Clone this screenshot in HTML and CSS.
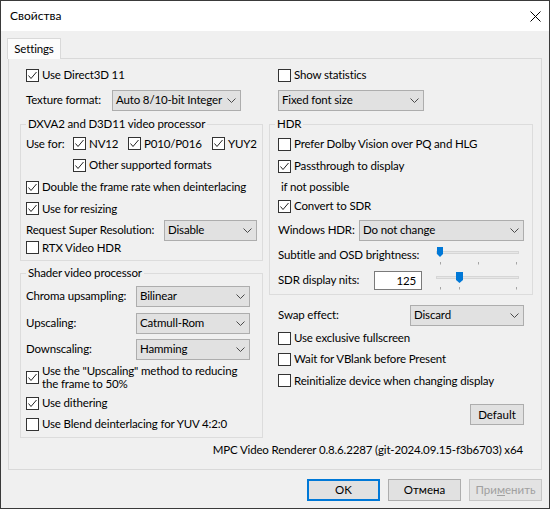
FILE: index.html
```html
<!DOCTYPE html>
<html lang="ru">
<head>
    <meta charset="UTF-8">
    <title>Свойства</title>
    <link rel="stylesheet" href="styles.css">
</head>
<body>
<div class="window">
    <div class="titlebar">
        <span class="title">Свойства</span>
        <svg class="close" width="11" height="11" viewBox="0 0 11 11"><path d="M0.5 0.5L10.5 10.5M10.5 0.5L0.5 10.5"/></svg>
    </div>
    <div class="client">
        <div class="tabbar"><div class="tab">Settings</div></div>
        <div class="panel">
            <div class="columns">
                <!-- left column -->
                <div class="col col-left">
                    <label class="row h22"><span class="box"><svg viewBox="0 0 11 11"><path d="M1.5 5.5L4 8.5 9.5 2"/></svg></span>Use Direct3D 11</label>
                    <div class="row h28">
                        <span class="lbl w86">Texture format:</span>
                        <div class="select w129"><span>Auto 8/10-bit Integer</span><svg viewBox="0 0 9 5"><path d="M0.5 0.5L4.5 4.5 8.5 0.5"/></svg></div>
                    </div>
                    <fieldset class="group group-left">
                        <legend>DXVA2 and D3D11 video processor</legend>
                        <div class="row h21 usefor">
                            <span>Use for:</span>
                            <label class="chk"><span class="box"><svg viewBox="0 0 11 11"><path d="M1.5 5.5L4 8.5 9.5 2"/></svg></span>NV12</label>
                            <label class="chk"><span class="box"><svg viewBox="0 0 11 11"><path d="M1.5 5.5L4 8.5 9.5 2"/></svg></span>P010/P016</label>
                            <label class="chk"><span class="box"><svg viewBox="0 0 11 11"><path d="M1.5 5.5L4 8.5 9.5 2"/></svg></span>YUY2</label>
                        </div>
                        <label class="row h22 indent"><span class="box"><svg viewBox="0 0 11 11"><path d="M1.5 5.5L4 8.5 9.5 2"/></svg></span>Other supported formats</label>
                        <label class="row h22"><span class="box"><svg viewBox="0 0 11 11"><path d="M1.5 5.5L4 8.5 9.5 2"/></svg></span>Double the frame rate when deinterlacing</label>
                        <label class="row h21"><span class="box"><svg viewBox="0 0 11 11"><path d="M1.5 5.5L4 8.5 9.5 2"/></svg></span>Use for resizing</label>
                        <div class="row h22">
                            <span class="lbl w138">Request Super Resolution:</span>
                            <div class="select w93"><span>Disable</span><svg viewBox="0 0 9 5"><path d="M0.5 0.5L4.5 4.5 8.5 0.5"/></svg></div>
                        </div>
                        <label class="row h13"><span class="box"></span>RTX Video HDR</label>
                    </fieldset>
                    <fieldset class="group group-left shader">
                        <legend>Shader video processor</legend>
                        <div class="row h28">
                            <span class="lbl w110">Chroma upsampling:</span>
                            <div class="select w114"><span>Bilinear</span><svg viewBox="0 0 9 5"><path d="M0.5 0.5L4.5 4.5 8.5 0.5"/></svg></div>
                        </div>
                        <div class="row h26">
                            <span class="lbl w110">Upscaling:</span>
                            <div class="select w114"><span>Catmull-Rom</span><svg viewBox="0 0 9 5"><path d="M0.5 0.5L4.5 4.5 8.5 0.5"/></svg></div>
                        </div>
                        <div class="row h26">
                            <span class="lbl w110">Downscaling:</span>
                            <div class="select w114"><span>Hamming</span><svg viewBox="0 0 9 5"><path d="M0.5 0.5L4.5 4.5 8.5 0.5"/></svg></div>
                        </div>
                        <label class="row h30 multiline"><span class="box"><svg viewBox="0 0 11 11"><path d="M1.5 5.5L4 8.5 9.5 2"/></svg></span><span>Use the "Upscaling" method to reducing<br>the frame to 50%</span></label>
                        <label class="row h22"><span class="box"><svg viewBox="0 0 11 11"><path d="M1.5 5.5L4 8.5 9.5 2"/></svg></span>Use dithering</label>
                        <label class="row h20"><span class="box"></span>Use Blend deinterlacing for YUV 4:2:0</label>
                    </fieldset>
                </div>

                <!-- right column -->
                <div class="col col-right">
                    <label class="row h22"><span class="box"></span>Show statistics</label>
                    <div class="row h28">
                        <div class="select w146"><span>Fixed font size</span><svg viewBox="0 0 9 5"><path d="M0.5 0.5L4.5 4.5 8.5 0.5"/></svg></div>
                    </div>
                    <fieldset class="group group-right">
                        <legend>HDR</legend>
                        <label class="row h22"><span class="box"></span>Prefer Dolby Vision over PQ and HLG</label>
                        <label class="row h22"><span class="box"><svg viewBox="0 0 11 11"><path d="M1.5 5.5L4 8.5 9.5 2"/></svg></span>Passthrough to display</label>
                        <div class="row h19 note">if not possible</div>
                        <label class="row h20"><span class="box"><svg viewBox="0 0 11 11"><path d="M1.5 5.5L4 8.5 9.5 2"/></svg></span>Convert to SDR</label>
                        <div class="row h28">
                            <span class="lbl w81">Windows HDR:</span>
                            <div class="select w165"><span>Do not change</span><svg viewBox="0 0 9 5"><path d="M0.5 0.5L4.5 4.5 8.5 0.5"/></svg></div>
                        </div>
                        <div class="row h22">
                            <span class="lbl w155">Subtitle and OSD brightness:</span>
                            <svg class="slider" width="90" height="20" viewBox="0 0 90 20">
                                <rect class="track" x="3.5" y="6.5" width="82" height="2"/>
                                <path class="tick" d="M7.5 17V19.5M45.5 17V19.5M83.5 17V19.5"/>
                                <path class="thumb" d="M4 2H10V9L7 12L4 9Z"/>
                            </svg>
                        </div>
                        <div class="row h28">
                            <span class="lbl w96">SDR display nits:</span>
                            <div class="num">125</div>
                            <svg class="slider gap11" width="90" height="20" viewBox="0 0 90 20">
                                <rect class="track" x="3.5" y="6.5" width="82" height="2"/>
                                <path class="tick" d="M7.5 17V19.5M26.5 17V19.5M83.5 17V19.5"/>
                                <path class="thumb" d="M23 2H30V10L26.5 13L23 10Z"/>
                            </svg>
                        </div>
                    </fieldset>
                    <div class="row h26 swap">
                        <span class="lbl w132">Swap effect:</span>
                        <div class="select w114"><span>Discard</span><svg viewBox="0 0 9 5"><path d="M0.5 0.5L4.5 4.5 8.5 0.5"/></svg></div>
                    </div>
                    <label class="row h20"><span class="box"></span>Use exclusive fullscreen</label>
                    <label class="row h22"><span class="box"></span>Wait for VBlank before Present</label>
                    <label class="row h21"><span class="box"></span>Reinitialize device when changing display</label>
                    <button class="btn default">Default</button>
                </div>
            </div>
            <div class="version">MPC Video Renderer 0.8.6.2287 (git-2024.09.15-f3b6703) x64</div>
        </div>
        <div class="buttons">
            <button class="btn focus">OK</button>
            <button class="btn">Отмена</button>
            <button class="btn" disabled>При<u>м</u>енить</button>
        </div>
    </div>
</div>
</body>
</html>
```

FILE: styles.css
```css
* {
    box-sizing: border-box;
}
body {
    margin: 0;
    font: 11.5px/16px Lato, "Noto Sans", sans-serif;
    letter-spacing: -0.15px;
    color: #000;
}
.window {
    width: 550px;
    height: 509px;
    border: 1px solid #3a3a3a;
    background: #f0f0f0;
    display: flex;
    flex-direction: column;
    overflow: hidden;
}
.titlebar {
    height: 30px;
    flex: none;
    background: #fff;
    display: flex;
    align-items: center;
    justify-content: space-between;
    padding: 0 8px 0 9px;
}
.title {
    font-size: 12px;
    letter-spacing: 0;
}
.close path {
    stroke: #000;
    stroke-width: 1;
    fill: none;
}
.client {
    padding: 7px 7px 0 7px;
    display: flex;
    flex-direction: column;
}
.tabbar {
    height: 20px;
    display: flex;
}
.tab {
    position: relative;
    z-index: 1;
    width: 54px;
    height: 21px;
    margin-left: -1px;
    border: 1px solid #d9d9d9;
    border-bottom: none;
    background: #fcfcfc;
    text-align: center;
    line-height: 19px;
}
.panel {
    height: 412px;
    border: 1px solid #d9d9d9;
    background: #f0f0f0;
    padding: 5px 7px 11px 11px;
}
.columns {
    display: grid;
    grid-template-columns: 243px 264px;
    column-gap: 6px;
    align-items: start;
    height: 374px;
}
.col {
    display: flex;
    flex-direction: column;
}
.col-left > .row {
    padding-left: 6px;
}
.col-right > .row {
    padding: 0 9px;
}
.row {
    display: flex;
    align-items: center;
    white-space: nowrap;
}
.h13 { height: 13px; }
.h19 { height: 19px; }
.h20 { height: 20px; }
.h21 { height: 21px; }
.h22 { height: 22px; }
.h26 { height: 26px; }
.h28 { height: 28px; }
.h30 { height: 30px; }

.lbl { flex: none; }
.w81 { width: 81px; }
.w86 { width: 86px; }
.w96 { width: 96px; }
.w110 { width: 110px; }
.w132 { width: 132px; }
.w138 { width: 138px; }
.w155 { width: 155px; }

/* checkboxes */
.box {
    flex: none;
    width: 13px;
    height: 13px;
    margin-right: 3px;
    border: 1px solid #333;
    background: #fff;
    display: flex;
}
.box svg {
    width: 11px;
    height: 11px;
}
.box path {
    fill: none;
    stroke: #222;
    stroke-width: 1;
}
.chk {
    display: flex;
    align-items: center;
}
.usefor {
    display: grid;
    grid-template-columns: 47px 55px 84px auto;
    align-items: center;
}
.indent {
    padding-left: 47px;
}
.multiline {
    align-items: center;
    line-height: 13.5px;
}
.note {
    padding-left: 3px;
}

/* group boxes */
.group {
    margin: 1px 0 0;
    min-width: 0;
    border: 1px solid #dcdcdc;
}
.group legend {
    padding: 0 2px;
    line-height: 18px;
}
.group-left {
    padding: 0 5px 6px 5px;
}
.group-left.shader {
    margin-top: 3px;
    padding-bottom: 3px;
}
.group-right {
    padding: 0 8px 0 8px;
}
.group-right legend {
    margin-left: -3px;
}

/* combo boxes */
.select {
    flex: none;
    height: 21px;
    border: 1px solid #adadad;
    background: #e1e1e1;
    display: flex;
    align-items: center;
    justify-content: space-between;
    padding: 0 4px 0 3px;
}
.select svg {
    width: 9px;
    height: 5px;
}
.select path {
    fill: none;
    stroke: #4a4a4a;
    stroke-width: 1;
}
.w93 { width: 93px; }
.w114 { width: 114px; }
.w129 { width: 129px; }
.w146 { width: 146px; }
.w165 { width: 165px; }

/* sliders */
.slider .track {
    fill: #e7e7e7;
    stroke: #d6d6d6;
}
.slider .tick {
    stroke: #a5a5a5;
    stroke-width: 1;
}
.slider .thumb {
    fill: #0078d7;
}
.gap11 {
    margin-left: 11px;
}
.num {
    width: 48px;
    height: 19px;
    border: 1px solid #7a7a7a;
    background: #fff;
    text-align: right;
    padding-right: 5px;
    line-height: 17px;
}

.swap {
    margin-top: 7px;
}

/* buttons */
.btn {
    font: inherit;
    color: #000;
    height: 22px;
    width: 73px;
    padding: 0;
    border: 1px solid #adadad;
    background: #e1e1e1;
}
.btn.default {
    width: 54px;
    height: 21px;
    margin: 13px 9px 0 0;
    align-self: flex-end;
}
.btn.focus {
    border: 2px solid #0078d7;
}
.btn:disabled {
    color: #a0a0a0;
    background: #e3e3e3;
    border-color: #c6c6c6;
}
.version {
    margin-top: 4px;
    text-align: right;
    padding-right: 11px;
    line-height: 16px;
}
.buttons {
    display: flex;
    justify-content: flex-end;
    gap: 8px;
    margin-top: 9px;
}
```
